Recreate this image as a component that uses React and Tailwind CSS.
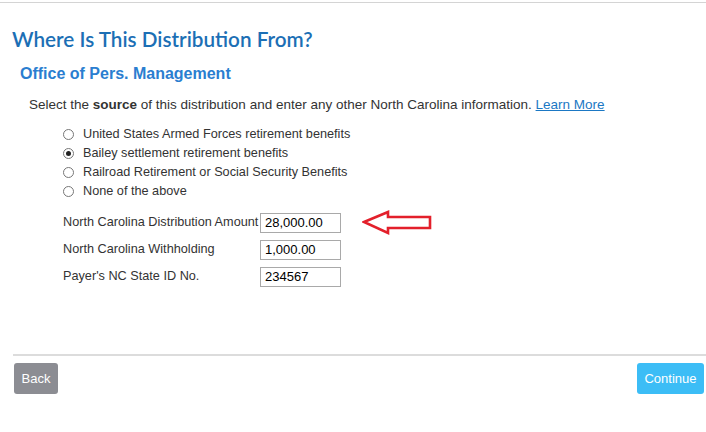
const options = [
  'United States Armed Forces retirement benefits',
  'Bailey settlement retirement benefits',
  'Railroad Retirement or Social Security Benefits',
  'None of the above',
];

const fields = [
  { label: 'North Carolina Distribution Amount', value: '28,000.00' },
  { label: 'North Carolina Withholding', value: '1,000.00' },
  { label: "Payer's NC State ID No.", value: '234567' },
];

const Radio = ({ checked }) => (
  <span className="w-[11px] h-[11px] rounded-full border border-[#777] bg-white flex items-center justify-center">
    {checked && <span className="w-[5px] h-[5px] rounded-full bg-[#222]" />}
  </span>
);

const App = () => {
  return (
    <div className="w-[706px] h-[432px] bg-white font-['Liberation_Sans',Arial,sans-serif] text-[#333]">
      <div className="h-[2px]" />
      <div className="h-px bg-[#d4d4d4]" />
      <div className="pl-[12px]">
        <h1 className="mt-[24px] text-[20.7px] leading-[24px] font-semibold text-[#1c6fb5] font-['Lato',sans-serif]">
          Where Is This Distribution From?
        </h1>
        <div className="pl-[8px]">
          <h2 className="mt-[13px] text-[16px] leading-[20px] font-bold text-[#2a7ed0]">Office of Pers. Management</h2>
          <p className="mt-[13px] pl-[9px] text-[13.5px] leading-[16px] text-[#333]">
            Select the <b>source</b> of this distribution and enter any other North Carolina information.{' '}
            <a className="text-[#1b78c4] underline">Learn More</a>
          </p>
          <div className="mt-[12px] pl-[43px] flex flex-col">
            {options.map((opt, i) => (
              <div key={opt} className="h-[19px] flex items-center gap-[9px] text-[12.7px]">
                <Radio checked={i === 1} />
                <span>{opt}</span>
              </div>
            ))}
          </div>
          <div className="mt-[11px] pl-[43px] flex flex-col gap-[6px]">
            {fields.map((f, i) => (
              <div key={f.label} className="flex items-center h-[21px]">
                <span className="w-[197px] text-[12.7px] whitespace-nowrap">{f.label}</span>
                <div className="w-[81px] h-[20px] border border-[#a9a9a9] bg-white text-[13px] text-black pl-[4px] flex items-center">
                  {f.value}
                </div>
                {i === 0 && (
                  <svg className="ml-[21px]" width="72" height="26" viewBox="0 0 72 26">
                    <path
                      d="M2 12 L26 2 L26 7 L68 7 L68 18 L26 18 L26 23 Z"
                      fill="none"
                      stroke="#e3202b"
                      strokeWidth="2.6"
                      strokeLinejoin="miter"
                    />
                  </svg>
                )}
              </div>
            ))}
          </div>
        </div>
      </div>
      <div className="mt-[67px] ml-[13px] h-[2px] bg-[#dcdcdc]" />
      <div className="mt-[7px] px-[2px] flex justify-between">
        <button className="ml-[12px] w-[44px] h-[31px] rounded-[3px] bg-[#8c8d93] text-white text-[13px]">Back</button>
        <button className="w-[67px] h-[31px] rounded-[3px] bg-[#3cbdf6] text-white text-[13px]">Continue</button>
      </div>
    </div>
  );
};

export default App;
